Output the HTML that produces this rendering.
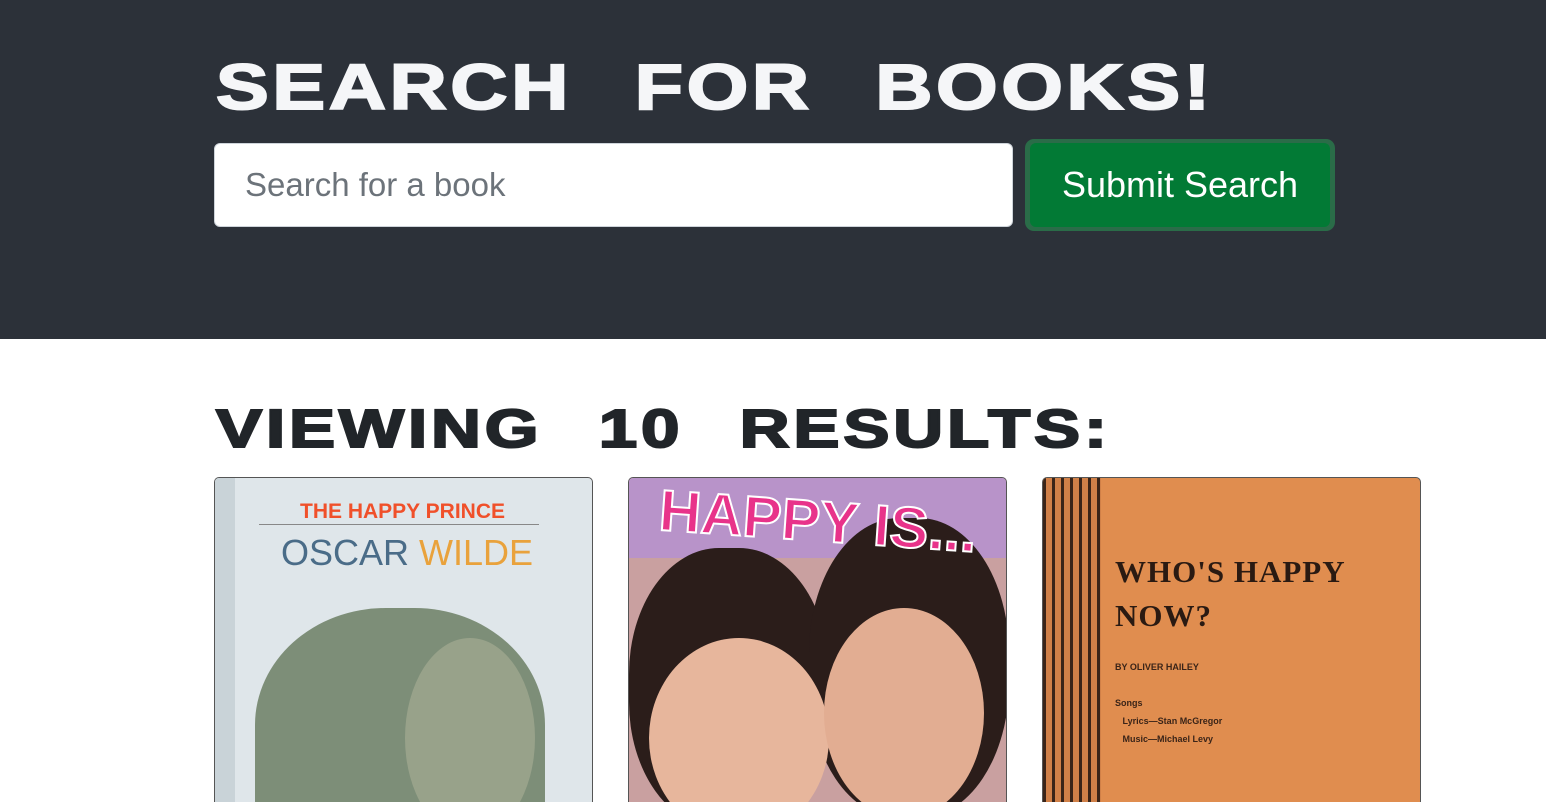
<!DOCTYPE html>
<html><head><style>
html,body{margin:0;width:1546px;height:801px;overflow:hidden;background:#fff;font-family:"Liberation Sans",sans-serif}
.hdr{position:absolute;left:0;top:0;width:1546px;height:339px;background:#2c3139}
.t{position:absolute;white-space:nowrap;font-weight:900;transform-origin:0 0;-webkit-text-stroke:2px currentColor;line-height:1}
.t1{left:216px;top:55px;color:#f5f6f8;font-size:64px;letter-spacing:3px;word-spacing:30px;transform:scaleX(1.235)}
.t2{left:216px;top:402px;color:#212529;font-size:54px;letter-spacing:3px;word-spacing:26px;transform:scaleX(1.28)}
.inp{position:absolute;left:214px;top:143px;width:797px;height:82px;background:#fff;border:1px solid #ced4da;border-radius:6px;box-sizing:content-box}
.inp span{position:absolute;left:30px;top:22px;font-size:33px;color:#6c737a}
.btn{position:absolute;left:1025px;top:139px;width:310px;height:92px;border-radius:9px;background:#2a6c48}
.btn div{position:absolute;left:5px;top:4px;width:300px;height:84px;border-radius:6px;background:#027a35;color:#fff;font-size:36px;text-align:center;line-height:84px}
.card{position:absolute;top:477px;width:377px;height:324px;border:1px solid #555;border-bottom:none;border-radius:5px 5px 0 0;overflow:hidden}
</style></head><body>
<div class="hdr"></div>
<div class="t t1">SEARCH FOR BOOKS!</div>
<div class="inp"><span>Search for a book</span></div>
<div class="btn"><div>Submit Search</div></div>
<div class="t t2">VIEWING 10 RESULTS:</div>
<div class="card" style="left:214px;background:#dfe6ea">
 <div style="position:absolute;left:0;top:0;width:20px;height:340px;background:#c9d3d8"></div>
 <div style="position:absolute;left:85px;top:22px;color:#f0502a;font-weight:bold;font-size:21px">THE HAPPY PRINCE</div>
 <div style="position:absolute;left:44px;top:46px;width:280px;height:1px;background:#888"></div>
 <div style="position:absolute;left:66px;top:54px;font-size:36px;color:#4a6c88">OSCAR <span style="color:#e9a23c">WILDE</span></div>
 <div style="position:absolute;left:40px;top:130px;width:290px;height:260px;border-radius:45% 45% 0 0;background:#7d8e78"></div>
 <div style="position:absolute;left:190px;top:160px;width:130px;height:200px;border-radius:50%;background:#98a28a"></div>
</div>
<div class="card" style="left:628px;background:#c9a0a0">
 <div style="position:absolute;left:0;top:0;width:377px;height:80px;background:#b893c9"></div>
 <div style="position:absolute;left:0;top:70px;width:200px;height:280px;border-radius:45%;background:#2b1d1a"></div>
 <div style="position:absolute;left:180px;top:40px;width:200px;height:300px;border-radius:45%;background:#2b1d1a"></div>
 <div style="position:absolute;left:20px;top:160px;width:180px;height:200px;border-radius:50%;background:#e7b69c"></div>
 <div style="position:absolute;left:195px;top:130px;width:160px;height:210px;border-radius:50%;background:#e2ad92"></div>
 <div style="position:absolute;left:30px;top:10px;font-size:58px;font-weight:900;color:#e8338a;transform:rotate(4deg);-webkit-text-stroke:2px #fff">HAPPY IS...</div>
</div>
<div class="card" style="left:1042px;background:#e08d4f">
 <div style="position:absolute;left:0;top:0;width:58px;height:340px;background:repeating-linear-gradient(90deg,#3a2418 0 3px,#d08048 3px 9px)"></div>
 <div style="position:absolute;left:72px;top:72px;font-family:'Liberation Serif',serif;font-weight:900;font-size:31px;color:#2a1a12;line-height:44px;letter-spacing:1px">WHO'S HAPPY<br>NOW?</div>
 <div style="position:absolute;left:72px;top:180px;font-size:9px;font-weight:bold;color:#3a2418;line-height:18px">BY OLIVER HAILEY<br><br>Songs<br>&nbsp;&nbsp;&nbsp;Lyrics—Stan McGregor<br>&nbsp;&nbsp;&nbsp;Music—Michael Levy</div>
</div>
</body></html>
